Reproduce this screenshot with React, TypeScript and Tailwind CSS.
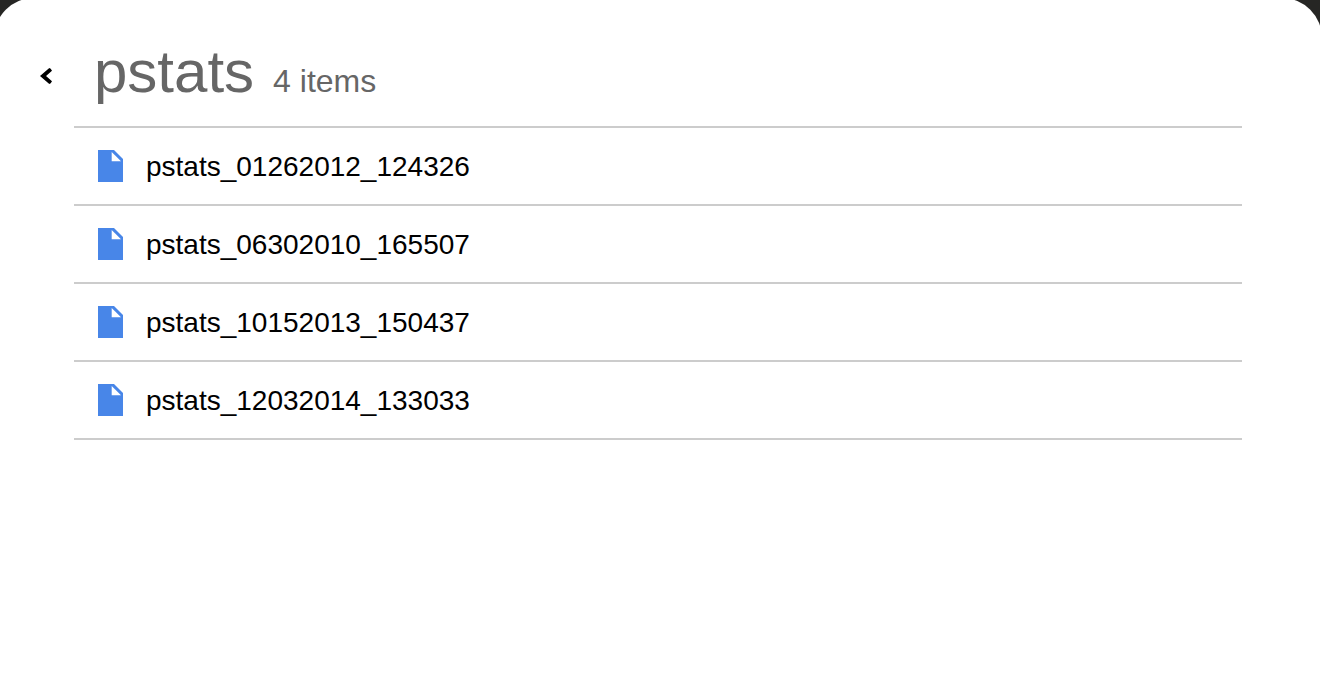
const files = [
  'pstats_01262012_124326',
  'pstats_06302010_165507',
  'pstats_10152013_150437',
  'pstats_12032014_133033',
];

function FileIcon() {
  return (
    <svg className="shrink-0" width="25" height="32" viewBox="0 0 25 32" aria-hidden="true">
      <path d="M0 0H16L25 9V32H0Z" fill="#4886e8" />
      <path d="M13.7 2V11.3H23Z" fill="#fff" />
    </svg>
  );
}

export default function App() {
  return (
    <div className="min-h-screen overflow-hidden bg-[#262624] font-['Liberation_Sans',Arial,sans-serif]">
      <main className="-mt-0.5 -mr-0.5 -ml-1.5 min-h-[calc(100vh+2px)] rounded-t-[40px] bg-white pt-5 pr-20 pl-11">
        <header className="flex h-[108px] items-center gap-[41px]">
          <button type="button" aria-label="Back" className="mt-2 ml-0.5 shrink-0">
            <svg width="13" height="16" viewBox="0 0 13 16" aria-hidden="true">
              <path d="M0 8L9.3 0Q10.8 0.3 12 2.8L6 8L12 13.2Q10.8 15.7 9.3 16Z" fill="#000" />
            </svg>
          </button>
          <div className="flex items-baseline gap-[19px] text-[#666]">
            <h1 className="text-[60px] leading-[68px]">pstats</h1>
            <p className="text-[32px] leading-[36px]">4 items</p>
          </div>
        </header>
        <ul className="ml-9 border-t-2 border-[#ccc]">
          {files.map((name) => (
            <li key={name} className="border-b-2 border-[#ccc]">
              <a href="#" className="flex h-[76px] items-center gap-[23px] pl-6 text-[28px] leading-8 text-black">
                <FileIcon />
                <span className="pt-0.5">{name}</span>
              </a>
            </li>
          ))}
        </ul>
      </main>
    </div>
  );
}
